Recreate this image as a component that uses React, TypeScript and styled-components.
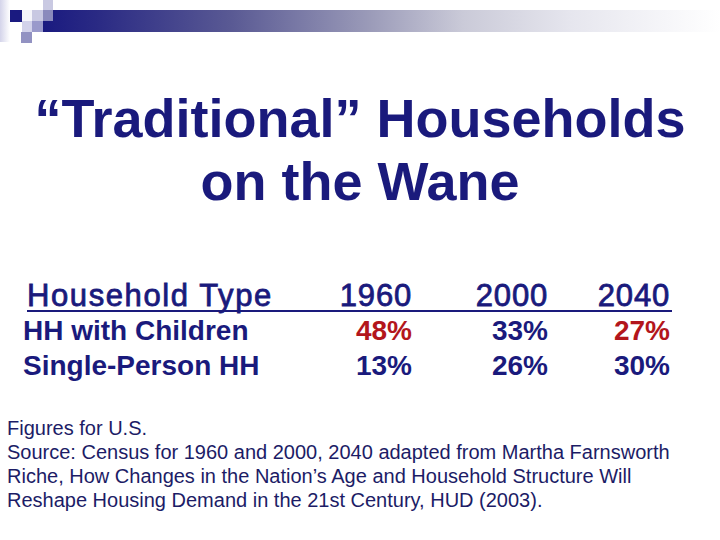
import React from "react";
import styled, { createGlobalStyle } from "styled-components";

const NAVY = "#1a1a7c";
const RED = "#b3161c";

const GlobalStyle = createGlobalStyle`
  html, body {
    margin: 0;
    padding: 0;
    background: #ffffff;
  }
  body {
    font-family: "Liberation Sans", Arial, sans-serif;
  }
`;

const Slide = styled.div`
  position: relative;
  width: 720px;
  height: 540px;
  overflow: hidden;
  display: flex;
  flex-direction: column;
  background: #ffffff;
`;

const Header = styled.div`
  position: relative;
  height: 45px;
`;

const Bar = styled.div`
  margin: 10px 0 0 43px;
  height: 22px;
  background: linear-gradient(
    to right,
    #1a1a80 0%,
    #2a2a84 8%,
    #5a5a94 28%,
    #9a9ab8 48%,
    #cacad8 62%,
    #e6e6ee 78%,
    #f6f6f9 92%,
    #ffffff 100%
  );
`;

const Logo = styled.svg`
  position: absolute;
  left: 0;
  top: 0;
`;

const Title = styled.h1`
  margin: 42px 0 0;
  font-size: 54px;
  line-height: 63px;
  font-weight: 700;
  color: ${NAVY};
  text-align: center;
  white-space: nowrap;
`;

const Table = styled.div`
  margin: 68px 0 0 23px;
  display: flex;
  flex-direction: column;
`;

const HeaderRow = styled.div`
  margin-left: 4px;
  padding-right: 2px;
  width: 643px;
  display: grid;
  grid-template-columns: 296px 89px 136px 122px;
  height: 29px;
  line-height: 29px;
  font-size: 31px;
  font-weight: 400;
  letter-spacing: 0.8px;
  -webkit-text-stroke: 0.8px ${NAVY};
  color: ${NAVY};
  border-bottom: 2px solid ${NAVY};
`;

const DataRow = styled.div`
  display: grid;
  grid-template-columns: 300px 89px 136px 122px;
  height: 35px;
  line-height: 35px;
  font-size: 28px;
  font-weight: 700;
  color: ${NAVY};
`;

const Label = styled.div<{ $wide?: boolean }>`
  white-space: nowrap;
  letter-spacing: ${(p) => (p.$wide ? "1.6px" : "normal")};
`;

const Cell = styled.div<{ $hot?: boolean }>`
  text-align: right;
  white-space: nowrap;
  color: ${(p) => (p.$hot ? RED : NAVY)};
`;

const Rows = styled.div`
  margin-top: 1px;
`;

const Note = styled.p`
  margin: 33px 0 0;
  padding-left: 7px;
  font-size: 20px;
  line-height: 24px;
  color: #1c1c66;
  white-space: nowrap;
`;

const rows = [
  { label: "HH with Children", values: ["48%", "33%", "27%"], hot: [true, false, true] },
  { label: "Single-Person HH", values: ["13%", "26%", "30%"], hot: [false, false, false] },
];

const years = ["1960", "2000", "2040"];

const App = () => {
  return (
    <Slide>
      <GlobalStyle />
      <Header>
        <Bar />
        <Logo width="60" height="45" viewBox="0 0 60 45">
          <defs>
            <linearGradient id="fade" x1="0" y1="0" x2="1" y2="0">
              <stop offset="0" stopColor="#d4d4ea" />
              <stop offset="1" stopColor="#ffffff" />
            </linearGradient>
          </defs>
          <rect x="0" y="0" width="10" height="42" fill="url(#fade)" />
          <rect x="43" y="0" width="10" height="10" fill="#c9c9e2" />
          <rect x="10" y="10" width="12" height="12" fill="#1a1a80" />
          <rect x="22" y="10" width="10" height="11" fill="#f4f4fa" />
          <rect x="32" y="10" width="11" height="11" fill="#c8c8e2" />
          <rect x="43" y="10" width="10" height="11" fill="#8a8abc" />
          <rect x="22" y="21" width="10" height="11" fill="#d2d2ea" />
          <rect x="32" y="21" width="11" height="11" fill="#9a9acb" />
          <rect x="21" y="32" width="11" height="11" fill="#9292c2" />
        </Logo>
      </Header>

      <Title>
        “Traditional” Households
        <br />
        on the Wane
      </Title>

      <Table>
        <HeaderRow>
          <Label $wide>Household Type</Label>
          {years.map((y) => (
            <Cell key={y}>{y}</Cell>
          ))}
        </HeaderRow>
        <Rows>
          {rows.map((r) => (
            <DataRow key={r.label}>
              <Label>{r.label}</Label>
              {r.values.map((v, i) => (
                <Cell key={i} $hot={r.hot[i]}>
                  {v}
                </Cell>
              ))}
            </DataRow>
          ))}
        </Rows>
      </Table>

      <Note>
        Figures for U.S.
        <br />
        Source: Census for 1960 and 2000, 2040 adapted from Martha Farnsworth
        <br />
        Riche, How Changes in the Nation’s Age and Household Structure Will
        <br />
        Reshape Housing Demand in the 21st Century, HUD (2003).
      </Note>
    </Slide>
  );
};

export default App;
